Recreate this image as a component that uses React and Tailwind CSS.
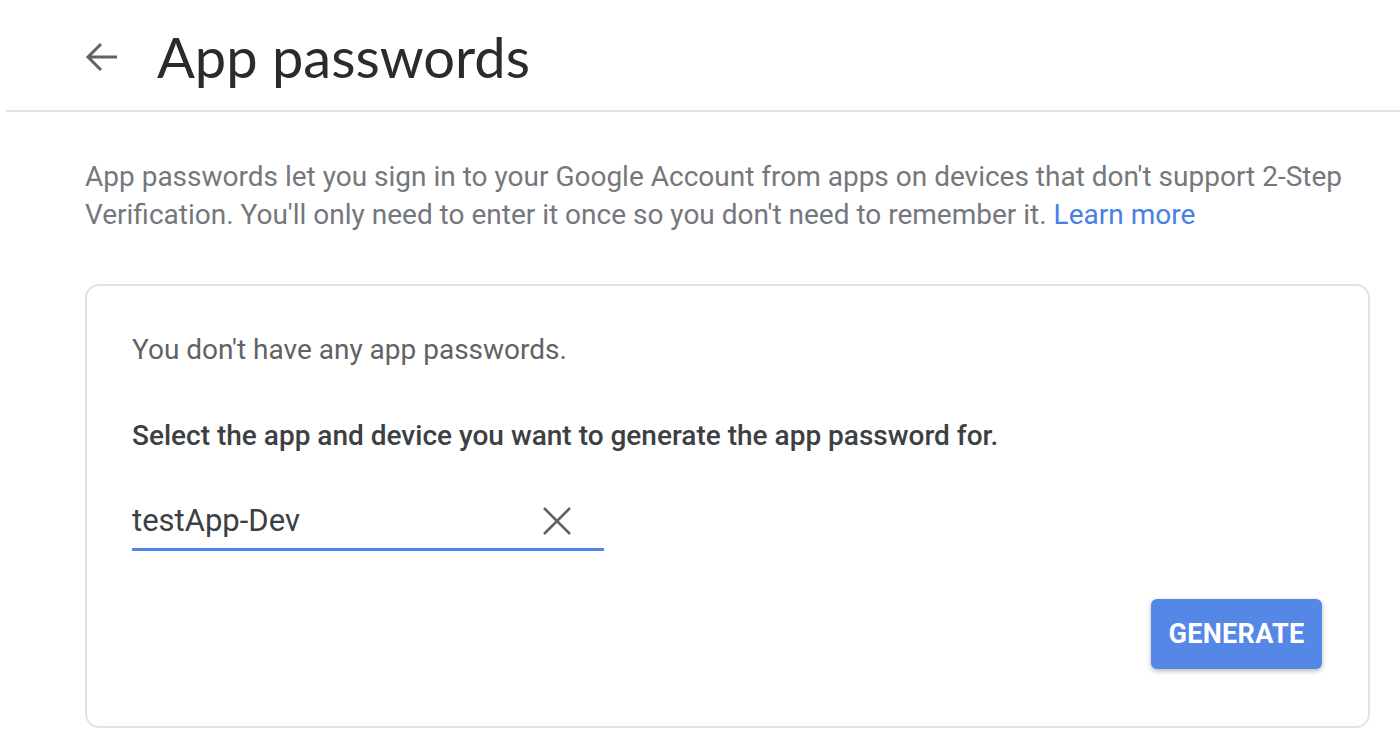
import React from 'react';

function BackArrow() {
  return (
    <svg width="34" height="34" viewBox="0 0 34 34" fill="none" className="shrink-0">
      <path d="M32 17H3 M16 4L3 17l13 13" stroke="#5f6368" strokeWidth="3" />
    </svg>
  );
}

function ClearIcon() {
  return (
    <svg width="30" height="30" viewBox="0 0 30 30" fill="none">
      <path d="M2 2L28 28 M28 2L2 28" stroke="#5f6368" strokeWidth="2.6" />
    </svg>
  );
}

export default function App() {
  const [value, setValue] = React.useState('testApp-Dev');

  return (
    <div className="min-h-screen bg-white font-['Roboto',sans-serif] text-[#3c4043]">
      <header className="ml-[6px] flex h-[112px] items-center border-b-2 border-[#e2e3e5] pl-[79px] pt-[4px]">
        <BackArrow />
        <h1 className="ml-[38px] font-['Lato',sans-serif] text-[56px] leading-none text-[#2a2b2e]">
          App passwords
        </h1>
      </header>

      <main className="pl-[85px] pr-[30px]">
        <p className="mt-[46px] text-[28px] leading-[38px] text-[#74787d]">
          App passwords let you sign in to your Google Account from apps on devices that don't support 2-Step
          Verification. You'll only need to enter it once so you don't need to remember it.{' '}
          <a href="#" className="text-[#4a80e6]">Learn more</a>
        </p>

        <section className="mt-[50px] flex h-[444px] w-[1285px] flex-col rounded-[14px] border-2 border-[#e3e3e3] pl-[45px] pr-[46px] pt-[45px]">
          <p className="text-[28px] leading-[38px] text-[#5f6368]">You don't have any app passwords.</p>
          <p className="mt-[48px] text-[28px] font-medium leading-[38px] text-[#3c4043]">
            Select the app and device you want to generate the app password for.
          </p>

          <div className="mt-[47px] flex w-[472px] items-center border-b-[3px] border-[#4f83e8] pb-[8px]">
            <input
              value={value}
              onChange={(e) => setValue(e.target.value)}
              className="min-w-0 flex-1 bg-transparent text-[31px] leading-[38px] text-[#3c4043] outline-none"
            />
            <button type="button" onClick={() => setValue('')} className="mr-[32px] flex items-center">
              <ClearIcon />
            </button>
          </div>

          <div className="mt-[48px] flex justify-end">
            <button
              type="button"
              className="h-[70px] w-[171px] rounded-[6px] bg-[#5587e7] text-[27px] font-bold tracking-[0.3px] text-white shadow-[0_2px_5px_rgba(0,0,0,0.3)]"
            >
              GENERATE
            </button>
          </div>
        </section>
      </main>
    </div>
  );
}
